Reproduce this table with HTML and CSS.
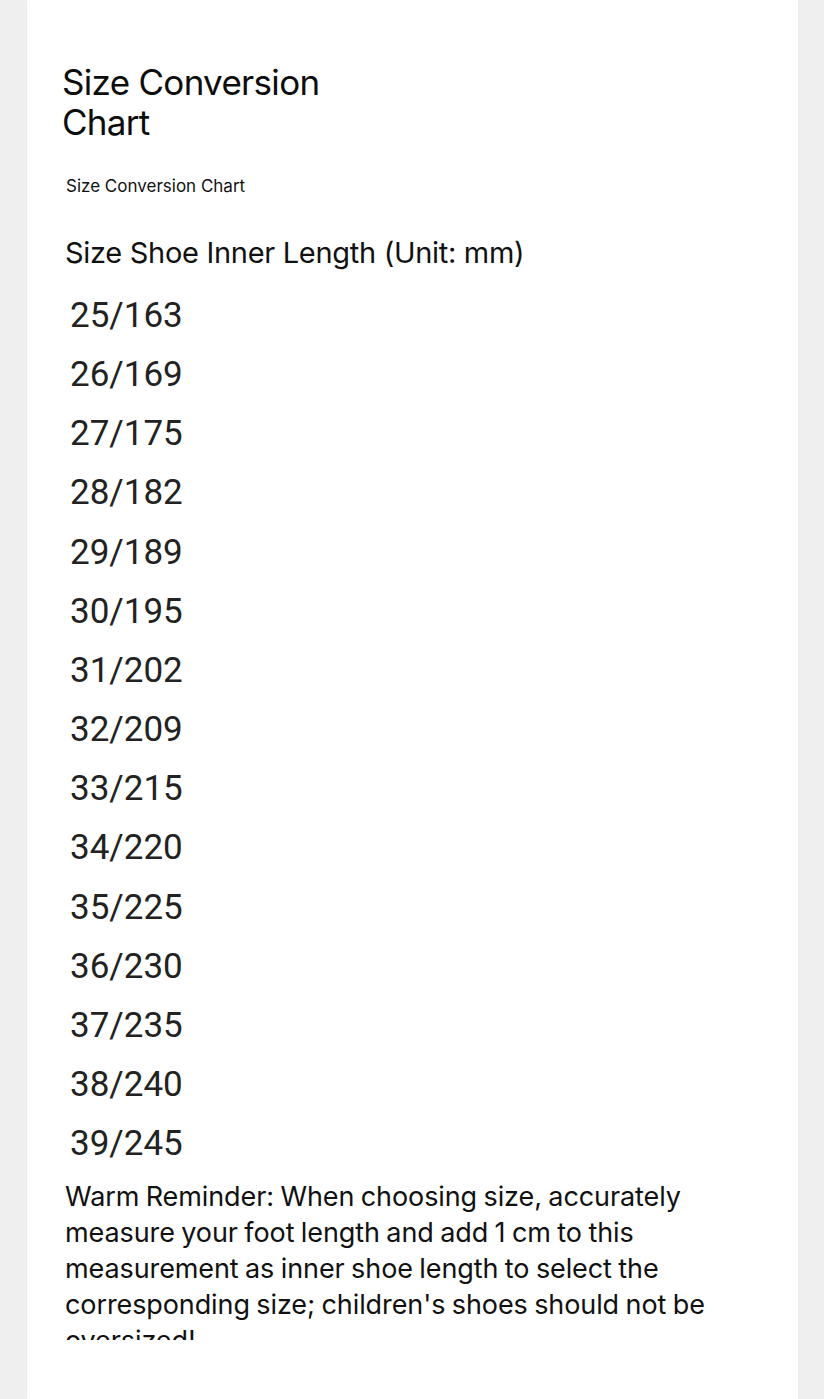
FILE: index.html
```html
<!DOCTYPE html>
<html lang="en">
<head>
<meta charset="utf-8">
<title>Size Conversion Chart</title>
<link rel="stylesheet" href="styles.css">
</head>
<body>
<main class="card">
  <h1 class="title">Size Conversion<br>Chart</h1>
  <p class="subtitle">Size Conversion Chart</p>
  <h2 class="heading">Size Shoe Inner Length (Unit: mm)</h2>
  <ul class="sizes">
    <li>25/163</li>
    <li>26/169</li>
    <li>27/175</li>
    <li>28/182</li>
    <li>29/189</li>
    <li>30/195</li>
    <li>31/202</li>
    <li>32/209</li>
    <li>33/215</li>
    <li>34/220</li>
    <li>35/225</li>
    <li>36/230</li>
    <li>37/235</li>
    <li>38/240</li>
    <li>39/245</li>
  </ul>
  <div class="reminder-wrap">
    <p class="reminder">Warm Reminder: When choosing size, accurately measure your foot length and add 1 cm to this measurement as inner shoe length to select the corresponding size; children's shoes should not be oversized!</p>
  </div>
</main>
</body>
</html>
```

FILE: styles.css
```css
html, body {
  margin: 0;
  padding: 0;
}
body {
  background: #efefef;
  height: 1399px;
  overflow: hidden;
  color: #111;
}
.card {
  margin-left: 27px;
  width: 771px;
  height: 1399px;
  background: #fff;
  box-sizing: border-box;
  padding: 62px 0 0 35px;
  box-shadow: 0 0 2px rgba(0, 0, 0, 0.04);
}
.title {
  margin: 0;
  font-family: Inter, "Noto Sans", sans-serif;
  font-weight: 400;
  font-size: 35px;
  line-height: 40px;
  letter-spacing: -0.7px;
  color: #0d0d0d;
}
.subtitle {
  margin: 34px 0 0 4px;
  font-family: Inter, "Noto Sans", sans-serif;
  font-size: 17px;
  line-height: 20px;
  color: #111;
}
.heading {
  margin: 39px 0 0 3px;
  font-family: Inter, "Noto Sans", sans-serif;
  font-weight: 400;
  font-size: 29px;
  line-height: 36px;
  letter-spacing: -0.3px;
  color: #111;
}
.sizes {
  list-style: none;
  margin: 15px 0 0 8px;
  padding: 0;
  font-family: Roboto, "Noto Sans", sans-serif;
  font-size: 35px;
  line-height: 59.15px;
  color: #222;
}
.reminder-wrap {
  margin: 6px 0 0 3px;
  height: 161px;
  overflow: hidden;
  width: 650px;
}
.reminder {
  margin: 0;
  font-family: Inter, "Noto Sans", sans-serif;
  font-size: 27px;
  line-height: 36px;
  letter-spacing: -0.1px;
  word-spacing: -1px;
  color: #111;
}
```
